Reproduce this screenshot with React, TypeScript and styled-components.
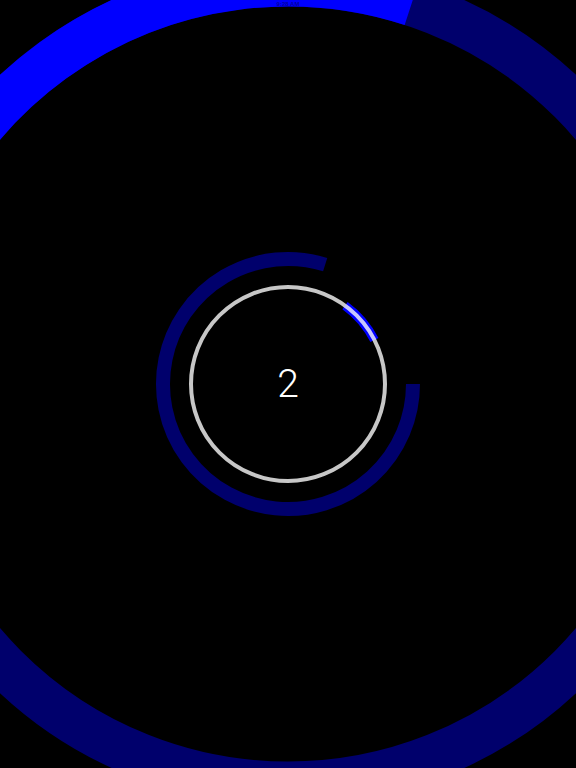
import React from 'react';
import styled, { createGlobalStyle } from 'styled-components';

const W = 576;
const H = 768;
const CX = W / 2;
const CY = H / 2;

// angles in degrees, clockwise from 12 o'clock
const point = (r: number, deg: number) => {
  const rad = (deg * Math.PI) / 180;
  return [CX + r * Math.sin(rad), CY - r * Math.cos(rad)];
};

const arcPath = (r: number, start: number, end: number) => {
  const [x1, y1] = point(r, start);
  const [x2, y2] = point(r, end);
  const large = end - start > 180 ? 1 : 0;
  return `M ${x1.toFixed(2)} ${y1.toFixed(2)} A ${r} ${r} 0 ${large} 1 ${x2.toFixed(2)} ${y2.toFixed(2)}`;
};

const GlobalStyle = createGlobalStyle`
  html, body {
    margin: 0;
    padding: 0;
    background: #000;
    overflow: hidden;
  }
  #root {
    height: 100vh;
  }
`;

const Stage = styled.div`
  display: grid;
  width: ${W}px;
  height: ${H}px;
  background: #000;
  overflow: hidden;

  & > * {
    grid-area: 1 / 1;
  }
`;

const Rings = styled.svg`
  display: block;
  width: ${W}px;
  height: ${H}px;
`;

const StatusBar = styled.div`
  align-self: start;
  justify-self: center;
  margin-top: 1px;
  font-family: "Liberation Sans", Arial, sans-serif;
  font-size: 6px;
  font-weight: bold;
  color: rgba(0, 0, 60, 0.5);
`;

const Counter = styled.div`
  align-self: center;
  justify-self: center;
  font-family: Roboto, "Helvetica Neue", "Open Sans", sans-serif;
  font-weight: 300;
  font-size: 39px;
  line-height: 1;
  color: #fff;
`;

const DARK = '#00006c';
const BRIGHT = '#0000ff';

const App: React.FC = () => {
  return (
    <>
      <GlobalStyle />
      <Stage>
        <Rings viewBox={`0 0 ${W} ${H}`}>
          <circle cx={CX} cy={CY} r={400} fill="none" stroke={DARK} strokeWidth={45} />
          <path d={arcPath(400, 270, 378)} fill="none" stroke={BRIGHT} strokeWidth={45} />

          <path d={arcPath(125, 90, 377.3)} fill="none" stroke={DARK} strokeWidth={14} />

          <path d={arcPath(97, 36, 63)} fill="none" stroke={BRIGHT} strokeWidth={9} />
          <circle cx={CX} cy={CY} r={97} fill="none" stroke="rgba(255,255,255,0.78)" strokeWidth={4} />
        </Rings>
        <StatusBar>9:28 AM</StatusBar>
        <Counter>2</Counter>
      </Stage>
    </>
  );
};

export default App;
